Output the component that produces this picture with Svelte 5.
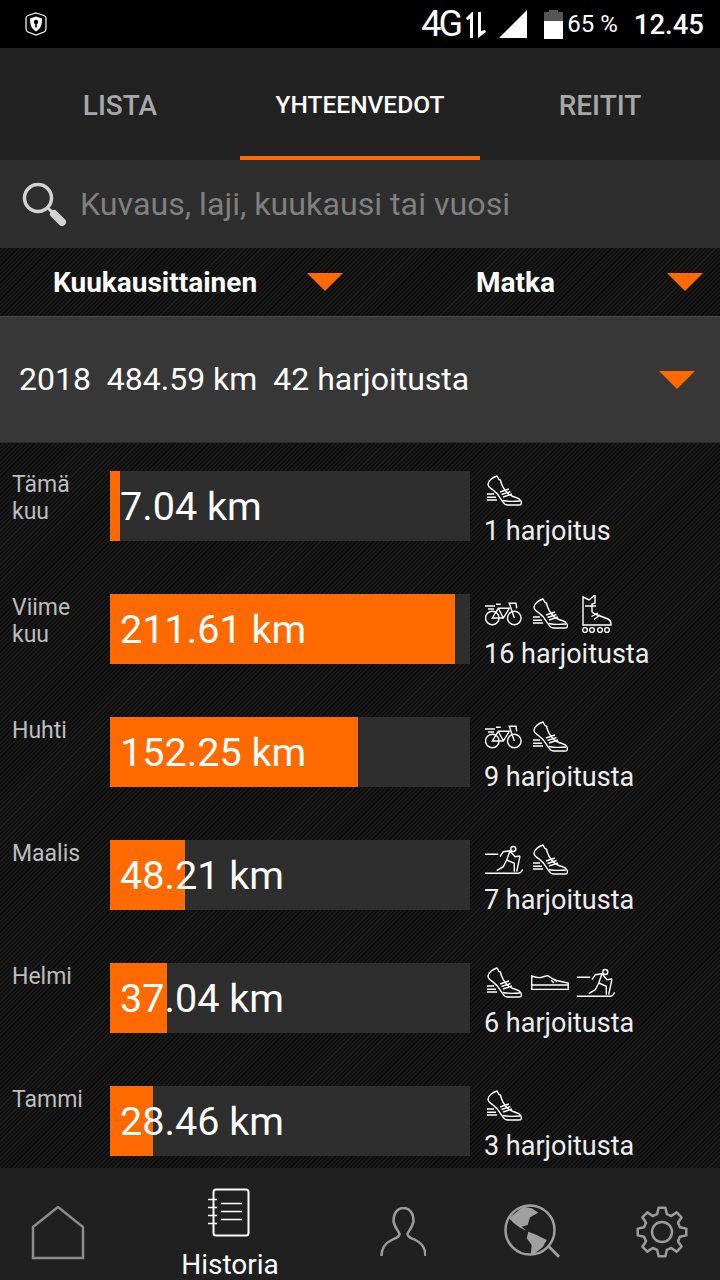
<script>
  const months = [
    { label: ["Tämä", "kuu"], km: "7.04 km", fill: 10, icons: ["shoe"], count: "1 harjoitus" },
    { label: ["Viime", "kuu"], km: "211.61 km", fill: 345, icons: ["bike", "shoe", "skate"], count: "16 harjoitusta" },
    { label: ["Huhti"], km: "152.25 km", fill: 248, icons: ["bike", "shoe"], count: "9 harjoitusta" },
    { label: ["Maalis"], km: "48.21 km", fill: 75, icons: ["ski", "shoe"], count: "7 harjoitusta" },
    { label: ["Helmi"], km: "37.04 km", fill: 57, icons: ["shoe", "flat", "ski"], count: "6 harjoitusta" },
    { label: ["Tammi"], km: "28.46 km", fill: 43, icons: ["shoe"], count: "3 harjoitusta" }
  ];

  // 8 teeth around the centre of a 52px box
  const polar = (r, deg) => {
    const a = (deg * Math.PI) / 180;
    return `${(26 + r * Math.cos(a)).toFixed(1)} ${(26 + r * Math.sin(a)).toFixed(1)}`;
  };
  const gearPath = () => {
    let d = "";
    for (let i = 0; i < 8; i++) {
      const c = i * 45 - 90;
      d += `${i ? "L" : "M"}${polar(18.5, c - 15)}L${polar(24.5, c - 8)}L${polar(24.5, c + 8)}L${polar(18.5, c + 15)}`;
    }
    return d + "z";
  };
</script>

{#snippet arrow()}
  <svg class="arrow" viewBox="0 0 36 20"><path d="M0 1h36L18 19z" fill="#ff6a00" /></svg>
{/snippet}

{#snippet sport(name)}
  {#if name === "shoe"}
    <svg class="sport shoe" viewBox="0 0 36 32">
      <path d="M11 1C7 2 2 6 2 9c0 3 2 4 5 6 2 2 4 3 5 5l5 7c1 2 3 3 5 3h11c2 0 3-1 2-4-1-2-3-3-5-3.500-4-1-7-2-10-6-3-3-4-6-5-9 0-2-1-3-2-3z" />
      <path d="M14 17l9-3M15.500 19.500l9-3M17 22l9-3M17 25.500c4 1 11 1 17 .5" />
      <path d="M1 19h7M1 22.300h9M1 25h10" />
    </svg>
  {:else if name === "bike"}
    <svg class="sport bike" viewBox="0 0 38 32">
      <circle cx="7.300" cy="20" r="6.800" /><circle cx="29.300" cy="20" r="6.800" />
      <path d="M7.300 20l6-9.700h11L18.300 20zM13.300 10.300L18.300 20M29.300 20L24.300 5.300H31l.7 5M11 6.300h4.700" />
      <path d="M0 8h10M3 11h6" />
    </svg>
  {:else if name === "skate"}
    <svg class="sport skate" viewBox="0 0 30 38">
      <path d="M1 2l6 3 6-5v8l-3 1v8l3 2 13 5c2 1 3 2 3 5v1H1z" />
      <path d="M3 11h11M9.500 21.500L16 18M12 24.500l6-4.500" />
      <circle cx="3" cy="35" r="2.400" /><circle cx="10" cy="35" r="2.400" /><circle cx="18" cy="35" r="2.400" /><circle cx="25" cy="35" r="2.400" />
    </svg>
  {:else if name === "flat"}
    <svg class="sport flat" viewBox="0 0 38 15">
      <path d="M.7 1c3 1 6 2 9 1.500l7-2c4 3 7 5 11 5.500l9.500 2v6.500H.7z" />
      <path d="M1 10h36M20 5l3 3M23 4l3 3" />
    </svg>
  {:else}
    <svg class="sport ski" viewBox="0 0 38 32">
      <circle cx="28.300" cy="5" r="2.500" />
      <path d="M0 10.300h13.300M15 12.700l3.300-5 6.700-1 5 6 5-.7M25 6.700L21.700 16l7.600 3.300v8.400M21.700 16l-3.400 6.700-6.600 4M35 12l-3.300 15.700M0 29.300h33.300c2 0 3.400-1.500 4.400-4" />
    </svg>
  {/if}
{/snippet}

<div class="phone">
  <header class="status">
    <svg class="shield" viewBox="0 0 22 24">
      <path d="M11 1l8 2.500c1.500.5 2 1.500 2 3v10c0 1.500-.5 2.500-2 3.500l-8 3-8-3c-1.500-1-2-2-2-3.500v-10c0-1.500.5-2.500 2-3z" fill="none" stroke="#fff" stroke-width="1.200" />
      <path d="M11 4.500l6 2c0 6-1 10-6 13-5-3-6-7-6-13z" fill="#fff" />
      <circle cx="11" cy="10" r="2.200" fill="#000" /><rect x="10.200" y="11" width="1.600" height="4.500" fill="#000" />
    </svg>
    <div class="status-right">
      <span class="net">4G</span>
      <svg class="updown" viewBox="0 0 22 26" fill="#fff">
        <path d="M7 0L1 6l1 2 3-1v19h3V0zM13 0h3v19l4-1 1 2-8 6z" />
      </svg>
      <svg class="signal" viewBox="0 0 28 28"><path d="M28 0v28H0z" fill="#fff" /></svg>
      <div class="battery"><span class="cap"></span><span class="body"><span class="level"></span></span></div>
      <span class="pct">65 %</span>
      <span class="clock">12.45</span>
    </div>
  </header>

  <nav class="tabs">
    <div class="tab">LISTA</div>
    <div class="tab active">YHTEENVEDOT</div>
    <div class="tab">REITIT</div>
  </nav>

  <div class="search">
    <svg viewBox="0 0 44 44" class="glass" fill="none" stroke="#d2d2d2" stroke-linecap="round">
      <circle cx="16" cy="16" r="13.500" stroke-width="3.500" />
      <path d="M26 26l5 5" stroke-width="3" />
      <path d="M32 32l8 8" stroke-width="8" />
    </svg>
    <span>Kuvaus, laji, kuukausi tai vuosi</span>
  </div>

  <div class="filters">
    <div class="filter first"><b>Kuukausittainen</b>{@render arrow()}</div>
    <div class="filter second"><b>Matka</b>{@render arrow()}</div>
  </div>

  <div class="year">
    <span>2018&nbsp; 484.59 km&nbsp; 42 harjoitusta</span>
    {@render arrow()}
  </div>

  <main class="list">
    {#each months as m}
      <div class="row">
        <div class="month">{#each m.label as l}<div>{l}</div>{/each}</div>
        <div class="bar">
          <div class="fill" style="width: {m.fill}px"></div>
          <div class="km">{m.km}</div>
        </div>
        <div class="info">
          <div class="icons">{#each m.icons as i}{@render sport(i)}{/each}</div>
          <div class="count">{m.count}</div>
        </div>
      </div>
    {/each}
  </main>

  <footer class="bottom">
    <div class="item home">
      <svg viewBox="0 0 54 54" width="54" height="54"><path d="M2 21L27 1l25 20v31H2z" fill="none" stroke="#8c8c8c" stroke-width="2.500" /></svg>
    </div>
    <div class="item hist">
      <svg viewBox="0 0 44 50" width="44" height="50" fill="none" stroke="#fff">
        <rect x="5.500" y="1.500" width="35" height="46" rx="2.500" stroke-width="2" />
        <path d="M0 11.500h9M0 19.500h9M0 27.500h9M0 35.500h9" stroke-width="1.600" />
        <path d="M13 15.500h21M13 23.500h21M13 31.500h21" stroke-width="1.500" />
      </svg>
      <span>Historia</span>
    </div>
    <div class="item user">
      <svg viewBox="0 0 46 50" width="46" height="50"><path d="M1.500 49c0-8 4-13 10-16 5-2 8-3 8-6 0-2-5-6-6-13 0-8 4-13 10-13s10 5 10 13c-1 7-6 11-6 13 0 3 3 4 8 6 6 3 10 8 10 16" fill="none" stroke="#9c9c9c" stroke-width="2.500" /></svg>
    </div>
    <div class="item globe">
      <svg viewBox="0 0 58 56" width="58" height="56">
        <circle cx="26" cy="26" r="24.500" fill="none" stroke="#a0a0a0" stroke-width="2.500" />
        <path d="M5 14.300L11 9.300 19.300 2.700 27.700 4.300 34.300 8.700 26 13.300 23.700 21 17.700 22.700 22.700 26.700 16 23.700 10 19.300z" fill="#a0a0a0" />
        <path d="M24.300 27.700L32.700 31 42.700 36 38.700 43.300 31 49.300 26.700 51 27.700 41 22.700 34.300z" fill="#a0a0a0" />
        <path d="M44.300 42L55 52.700" stroke="#a0a0a0" stroke-width="3" />
      </svg>
    </div>
    <div class="item gear">
      <svg viewBox="0 0 52 52" width="52" height="52" fill="none" stroke="#9c9c9c" stroke-width="2.500" stroke-linejoin="round">
        <circle cx="26" cy="26" r="10" />
        <path d={gearPath()} />
      </svg>
    </div>
  </footer>
</div>

<style>
  :global(body) {
    background: #000;
  }

  .phone {
    width: 720px;
    height: 1280px;
    display: flex;
    flex-direction: column;
    overflow: hidden;
    font-family: Roboto, "Liberation Sans", sans-serif;
    color: #fff;
  }

  .status {
    height: 48px;
    flex: none;
    background: #000;
    display: flex;
    align-items: center;
    justify-content: space-between;
    padding: 0 16px 0 25px;
  }
  .shield {
    width: 22px;
    height: 24px;
  }
  .status-right {
    display: flex;
    align-items: center;
  }
  .net {
    font-size: 36px;
    letter-spacing: -3px;
    width: 44px;
    line-height: 48px;
  }
  .updown {
    width: 22px;
    height: 26px;
    margin-top: 1px;
  }
  .signal {
    width: 28px;
    height: 28px;
    margin: 0 0 0 12px;
  }
  .battery {
    width: 19px;
    height: 29px;
    margin: 0 0 0 17px;
    display: flex;
    flex-direction: column;
    align-items: center;
  }
  .cap {
    width: 9px;
    height: 2px;
    background: #555;
  }
  .body {
    width: 100%;
    flex: 1;
    background: #555;
    display: flex;
    align-items: flex-end;
  }
  .level {
    width: 100%;
    height: 18px;
    background: #fff;
  }
  .pct {
    font-size: 24px;
    margin-left: 4px;
  }
  .clock {
    font-size: 27.500px;
    font-weight: 500;
    margin-left: 16px;
  }

  .tabs {
    height: 112px;
    flex: none;
    background: #222;
    display: flex;
  }
  .tab {
    flex: 1;
    display: flex;
    align-items: center;
    justify-content: center;
    padding-top: 6px;
    font-size: 28px;
    font-weight: 500;
    color: #a8a8a8;
    border-bottom: 4px solid transparent;
  }
  .tab.active {
    color: #fff;
    font-size: 24.500px;
    border-bottom-color: #ff6a00;
    padding-top: 4px;
  }

  .search {
    height: 88px;
    flex: none;
    background: #2e2e2e;
    display: flex;
    align-items: center;
    padding-left: 22px;
    gap: 14px;
    font-size: 32.200px;
    color: #808080;
  }
  .glass {
    width: 44px;
    height: 44px;
  }

  .filters,
  .list {
    background-color: #141414;
    background-image: repeating-linear-gradient(135deg, #0f0f0f 0 1.500px, #191919 1.500px 3px);
  }

  .filters {
    height: 68px;
    flex: none;
    display: flex;
    align-items: center;
    font-size: 28px;
  }
  .filter {
    display: flex;
    align-items: center;
    justify-content: space-between;
  }
  .filter b {
    font-weight: 700;
    padding-top: 1px;
  }
  .first {
    width: 290px;
    margin-left: 53px;
  }
  .second {
    width: 227px;
    margin-left: 133px;
  }

  .arrow {
    width: 36px;
    height: 20px;
    flex: none;
  }

  .year {
    height: 127px;
    flex: none;
    box-sizing: border-box;
    background: #383838;
    border-top: 1px solid #4a4a4a;
    border-bottom: 1px solid #2a2a2a;
    display: flex;
    align-items: center;
    justify-content: space-between;
    padding: 0 25px 0 19px;
    font-size: 32px;
  }
  .year span {
    margin-bottom: 2px;
  }

  .list {
    flex: 1;
    min-height: 0;
    overflow: hidden;
    padding-top: 28px;
    display: flex;
    flex-direction: column;
    gap: 53px;
  }

  .row {
    display: flex;
    height: 70px;
    flex: none;
  }
  .month {
    width: 110px;
    flex: none;
    box-sizing: border-box;
    padding-left: 12px;
    font-size: 23px;
    line-height: 27px;
    color: #bdbdbd;
  }
  .bar {
    position: relative;
    width: 360px;
    flex: none;
    background: #2e2e2e;
  }
  .fill {
    height: 100%;
    background: #ff6a00;
  }
  .km {
    position: absolute;
    left: 10px;
    top: 0;
    line-height: 72px;
    font-size: 39.600px;
  }
  .info {
    margin-left: 15px;
    display: flex;
    flex-direction: column;
    color: #eee;
  }
  .icons {
    height: 40px;
    flex: none;
    display: flex;
    align-items: center;
    gap: 9px;
  }
  .count {
    flex: none;
    margin: 1px 0 0 -1px;
    font-size: 27px;
    line-height: 38px;
    white-space: nowrap;
  }

  .sport {
    fill: none;
    stroke: #fff;
    stroke-width: 1.400;
    flex: none;
  }
  .shoe {
    width: 36px;
    height: 32px;
  }
  .shoe:first-child {
    margin-left: 1px;
  }
  .bike {
    width: 38px;
    height: 32px;
  }
  .skate {
    width: 30px;
    height: 38px;
    margin-left: 5px;
  }
  .flat {
    width: 38px;
    height: 15px;
    margin: -2px -1px 0 0;
  }
  .ski {
    width: 38px;
    height: 32px;
  }

  .bottom {
    height: 112px;
    flex: none;
    background: #202020;
    display: grid;
    grid-template-columns: 116px 228px 118px 142px 1fr;
    align-items: start;
    justify-items: center;
  }
  .item {
    display: flex;
    flex-direction: column;
    align-items: center;
  }
  .home {
    padding-top: 38px;
  }
  .hist {
    padding-top: 20px;
    gap: 11px;
    font-size: 28px;
    line-height: 32px;
  }
  .user {
    padding-top: 39px;
  }
  .globe {
    padding-top: 36px;
  }
  .gear {
    padding-top: 38px;
  }
</style>
